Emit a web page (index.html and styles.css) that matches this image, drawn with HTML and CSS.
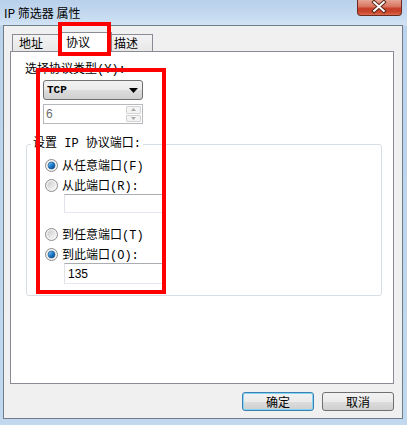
FILE: index.html
```html
<!DOCTYPE html>
<html lang="zh-CN">
<head>
<meta charset="utf-8">
<title>IP 筛选器 属性</title>
<link rel="stylesheet" href="styles.css">
</head>
<body>
<div class="window">
  <div class="titlebar">
    <span class="title">IP 筛选器 属性</span>
    <div class="close">
      <svg width="45" height="16" viewBox="0 0 45 16">
        <path d="M17.5 3 L27.5 12 M27.5 3 L17.5 12" stroke="#5a2418" stroke-width="4" stroke-linecap="square" fill="none"/>
        <path d="M17.5 3 L27.5 12 M27.5 3 L17.5 12" stroke="#ffffff" stroke-width="2" stroke-linecap="square" fill="none"/>
      </svg>
    </div>
  </div>
  <div class="dialog">
    <div class="tabs">
      <div class="tab tab-addr">地址</div>
      <div class="tab tab-proto active">协议</div>
      <div class="tab tab-desc">描述</div>
    </div>
    <div class="panel">
      <div class="label t">选择协议类型(Y):</div>
      <div class="combo">
        <span class="combo-text">TCP</span>
        <svg class="combo-arrow" width="9" height="5" viewBox="0 0 9 5"><path d="M0 0 H9 L4.5 5 Z" fill="#000"/></svg>
      </div>
      <div class="spin">
        <span class="spin-text">6</span>
        <div class="spin-btns">
          <div class="spin-btn"><svg width="5" height="3" viewBox="0 0 5 3"><path d="M0 3 H5 L2.5 0 Z" fill="#a9a9a9"/></svg></div>
          <div class="spin-btn"><svg width="5" height="3" viewBox="0 0 5 3"><path d="M0 0 H5 L2.5 3 Z" fill="#a9a9a9"/></svg></div>
        </div>
      </div>
      <fieldset class="group">
        <legend class="t">设置 IP 协议端口:</legend>
        <div class="radios">
          <div class="radio-row">
            <svg class="radio" width="13" height="13" viewBox="0 0 13 13">
              <defs>
                <linearGradient id="rc1" x1="0" y1="0" x2="1" y2="1"><stop offset="0" stop-color="#9fdcff"/><stop offset="0.5" stop-color="#1e7ecf"/><stop offset="1" stop-color="#0a3f7a"/></linearGradient>
              </defs>
              <circle cx="6.5" cy="6.5" r="6" fill="#f3f3f3" stroke="#8b8c8d"/>
              <circle cx="6.5" cy="6.5" r="4.2" fill="#d8d8d8"/>
              <circle cx="6.5" cy="6.5" r="3.4" fill="url(#rc1)" stroke="#0b4c8a" stroke-width="0.6"/>
            </svg>
            <span class="t">从任意端口(F)</span>
          </div>
          <div class="radio-row">
            <svg class="radio" width="13" height="13" viewBox="0 0 13 13">
              <defs>
                <linearGradient id="ru1" x1="0" y1="0" x2="1" y2="1"><stop offset="0" stop-color="#c9c9c9"/><stop offset="1" stop-color="#fafafa"/></linearGradient>
              </defs>
              <circle cx="6.5" cy="6.5" r="6" fill="#f3f3f3" stroke="#8b8c8d"/>
              <circle cx="6.5" cy="6.5" r="4.2" fill="url(#ru1)"/>
            </svg>
            <span class="t">从此端口(R):</span>
          </div>
          <div class="textbox box-one"></div>
          <div class="radio-row row-gap">
            <svg class="radio" width="13" height="13" viewBox="0 0 13 13">
              <defs>
                <linearGradient id="ru2" x1="0" y1="0" x2="1" y2="1"><stop offset="0" stop-color="#c9c9c9"/><stop offset="1" stop-color="#fafafa"/></linearGradient>
              </defs>
              <circle cx="6.5" cy="6.5" r="6" fill="#f3f3f3" stroke="#8b8c8d"/>
              <circle cx="6.5" cy="6.5" r="4.2" fill="url(#ru2)"/>
            </svg>
            <span class="t">到任意端口(T)</span>
          </div>
          <div class="radio-row">
            <svg class="radio" width="13" height="13" viewBox="0 0 13 13">
              <defs>
                <linearGradient id="rc2" x1="0" y1="0" x2="1" y2="1"><stop offset="0" stop-color="#9fdcff"/><stop offset="0.5" stop-color="#1e7ecf"/><stop offset="1" stop-color="#0a3f7a"/></linearGradient>
              </defs>
              <circle cx="6.5" cy="6.5" r="6" fill="#f3f3f3" stroke="#8b8c8d"/>
              <circle cx="6.5" cy="6.5" r="4.2" fill="#d8d8d8"/>
              <circle cx="6.5" cy="6.5" r="3.4" fill="url(#rc2)" stroke="#0b4c8a" stroke-width="0.6"/>
            </svg>
            <span class="t">到此端口(O):</span>
          </div>
          <div class="textbox box-two"><span class="box-text">135</span></div>
        </div>
      </fieldset>
    </div>
    <div class="buttons">
      <div class="btn btn-default">确定</div>
      <div class="btn">取消</div>
    </div>
  </div>
  <div class="mark mark-tab"></div>
  <div class="mark mark-group"></div>
</div>
</body>
</html>
```
FILE: styles.css
```css
html, body {
  margin: 0;
  padding: 0;
}
body {
  background: #c3d8ee;
}
.window {
  position: relative;
  width: 407px;
  height: 425px;
  overflow: hidden;
  background: linear-gradient(to bottom, #b8d0ea 0px, #c8dcf1 18px, #d2e3f4 25px, #bcd3ec 26px, #c2d8ee 425px);
  font-family: "Noto Sans CJK SC", sans-serif;
  font-size: 12px;
  color: #000;
}
.t {
  font-family: "Liberation Mono", "Noto Sans CJK SC", monospace;
  font-size: 12px;
}
.titlebar {
  display: flex;
  align-items: flex-start;
  height: 25px;
}
.title {
  line-height: 25px;
  padding-left: 4px;
  color: #000;
}
.close {
  margin-left: auto;
  margin-right: 5px;
  width: 45px;
  height: 16px;
  box-sizing: border-box;
  border: 1px solid #6b2a1f;
  border-top: none;
  border-radius: 0 0 4px 4px;
  background: linear-gradient(to bottom, #e6a594 0%, #d9735d 45%, #c7402a 55%, #c9452d 80%, #dc6f4f 100%);
  display: flex;
}
.close svg {
  margin: -1px 0 0 -1px;
}
.dialog {
  margin-left: 3px;
  width: 400px;
  height: 394px;
  box-sizing: border-box;
  border: 1px solid #6f7c8b;
  background: #f0f0f0;
}
.tabs {
  display: flex;
  align-items: flex-end;
  height: 25px;
  box-sizing: border-box;
  padding: 8px 0 0 8px;
}
.tab {
  height: 17px;
  box-sizing: border-box;
  border: 1px solid #898c95;
  border-bottom: none;
  background: linear-gradient(to bottom, #f3f3f3, #e8e8e8);
  line-height: 15px;
  white-space: nowrap;
}
.tab-addr {
  width: 48px;
  padding-left: 6px;
}
.tab-proto {
  width: 54px;
  margin: 0 -2px -1px -2px;
  height: 20px;
  padding-left: 7px;
  background: #fff;
  position: relative;
  line-height: 17px;
}
.tab-desc {
  width: 43px;
  padding-left: 3px;
}
.panel {
  margin-left: 6px;
  width: 384px;
  height: 333px;
  box-sizing: border-box;
  border: 1px solid #898c95;
  background: #fff;
  padding: 11px 0 0 14px;
}
.label {
  line-height: 14px;
  height: 14px;
  white-space: nowrap;
}
.combo {
  margin: 3px 0 0 18px;
  width: 100px;
  height: 20px;
  box-sizing: border-box;
  border: 1px solid #707070;
  border-radius: 3px;
  background: linear-gradient(to bottom, #f2f2f2 0%, #ebebeb 50%, #dddddd 50%, #cfcfcf 100%);
  display: flex;
  align-items: center;
  padding: 0 3px 0 3px;
}
.combo-text {
  font-family: "Liberation Mono", monospace;
  font-weight: bold;
  font-size: 11px;
  line-height: 18px;
}
.combo-arrow {
  margin-left: auto;
  margin-right: 1px;
}
.spin {
  margin: 4px 0 0 18px;
  width: 100px;
  height: 20px;
  box-sizing: border-box;
  border: 1px solid #b5b8bc;
  background: #fff;
  display: flex;
  align-items: center;
  padding-left: 2px;
}
.spin-text {
  font-family: "Liberation Sans", sans-serif;
  font-size: 12px;
  color: #6d6d6d;
  line-height: 18px;
}
.spin-btns {
  margin-left: auto;
  margin-right: 1px;
  width: 15px;
  height: 16px;
  display: flex;
  flex-direction: column;
  gap: 1px;
}
.spin-btn {
  flex: 1;
  box-sizing: border-box;
  border: 1px solid #d2d2d2;
  border-radius: 1px;
  background: #f4f4f4;
  display: flex;
  align-items: center;
  justify-content: center;
}
.group {
  margin: 13px 0 0 1px;
  width: 356px;
  box-sizing: border-box;
  border: 1px solid #d5dfe5;
  border-radius: 3px;
  padding: 0 0 11px 0;
  min-inline-size: 0;
}
.group legend {
  margin-left: 4px;
  padding: 0 2px;
  line-height: 14px;
  white-space: nowrap;
}
.radios {
  padding-top: 4px;
}
.radio-row {
  display: flex;
  align-items: center;
  height: 20px;
  padding-left: 18px;
  white-space: nowrap;
}
.radio {
  margin-right: 4px;
  flex: none;
}
.row-gap {
  margin-top: 11px;
}
.textbox {
  margin-left: 37px;
  width: 101px;
  box-sizing: border-box;
  border: 1px solid #e2e3ea;
  border-top-color: #abadb3;
  border-bottom-color: #e3e9ef;
  background: #fff;
  display: flex;
  align-items: center;
  padding-left: 3px;
}
.box-one {
  margin-top: -1px;
  height: 19px;
}
.box-two {
  margin-top: -1px;
  height: 21px;
}
.box-text {
  font-family: "Liberation Sans", sans-serif;
  font-size: 12px;
}
.buttons {
  display: flex;
  justify-content: flex-end;
  gap: 8px;
  margin-top: 8px;
  padding-right: 8px;
}
.btn {
  width: 72px;
  height: 19px;
  box-sizing: border-box;
  border: 1px solid #707070;
  border-radius: 3px;
  background: linear-gradient(to bottom, #f2f2f2 0%, #ebebeb 50%, #dddddd 50%, #cfcfcf 100%);
  text-align: center;
  line-height: 17px;
  font-size: 12px;
}
.btn-default {
  border-color: #3c7fb1;
  box-shadow: inset 0 0 0 1px #84d4f4;
}
.mark {
  position: absolute;
  box-sizing: border-box;
  border: 4px solid #ff0000;
}
.mark-tab {
  left: 58px;
  top: 22px;
  width: 53px;
  height: 34px;
}
.mark-group {
  left: 36px;
  top: 68px;
  width: 130px;
  height: 226px;
}
```
